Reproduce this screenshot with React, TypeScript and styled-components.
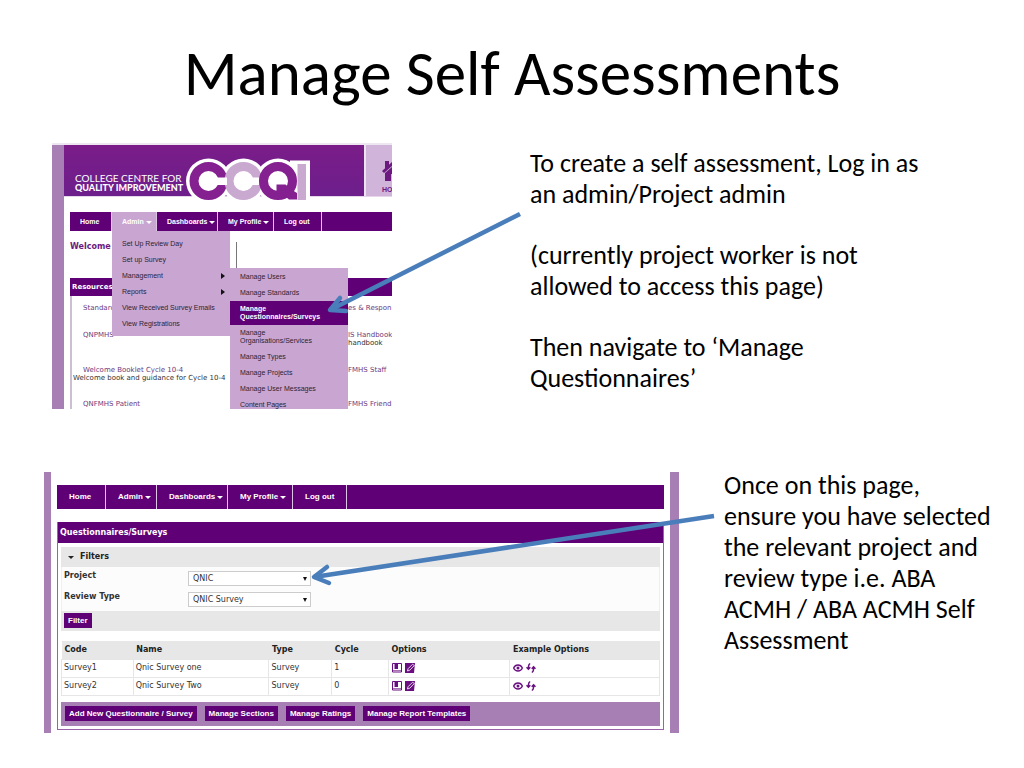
import React from "react";
import styled, { createGlobalStyle } from "styled-components";

const purple = "#5f0076";
const mauve = "#a87fb5";
const lilac = "#c9a6d2";
const arrowBlue = "#4a7ebb";
const arial = `"Liberation Sans", Arial, sans-serif`;
const verdana = `"DejaVu Sans", Verdana, sans-serif`;

const GlobalStyle = createGlobalStyle`
  *, *::before, *::after { box-sizing: border-box; }
  body { margin: 0; background: #fff; color: #000; font-family: Carlito, Calibri, Lato, sans-serif; }
  h1, h2, p, ul { margin: 0; padding: 0; }
  ul { list-style: none; }
  a { color: inherit; text-decoration: none; }
  svg { display: block; }
`;

const Slide = styled.main`
  min-height: 100vh;
  overflow: hidden;
  padding: 36px 0 32px;
`;

const Title = styled.h1`
  height: 107px;
  font-size: 63px;
  line-height: 76px;
  font-weight: 400;
  text-align: center;
`;

const Section = styled.section<{ $cols: string; $left: number; $gap: number }>`
  position: relative;
  display: grid;
  grid-template-columns: ${(p) => p.$cols};
  column-gap: ${(p) => p.$gap}px;
  align-items: start;
  padding-left: ${(p) => p.$left}px;
`;

const FirstSection = styled(Section)`
  margin-bottom: 61px;
`;

const Note = styled.div<{ $top?: number }>`
  padding-top: ${(p) => p.$top ?? 0}px;
  font-size: 26px;
  line-height: 31px;
  white-space: nowrap;
  p + p { margin-top: 30px; }
`;

const ArrowLayer = styled.svg`
  position: absolute;
  top: 0;
  left: 0;
  width: 100%;
  pointer-events: none;
  z-index: 5;
  overflow: visible;
`;

/* ---------- shared navigation bar ---------- */

const NavBar = styled.nav<{ $height: number; $size: number }>`
  display: flex;
  height: ${(p) => p.$height}px;
  background: ${purple};
  color: #fff;
  font: bold ${(p) => p.$size}px/${(p) => p.$height}px ${arial};
  white-space: nowrap;
`;

const NavLink = styled.a<{ $width: number; $pad: number; $active?: boolean }>`
  display: flex;
  align-items: center;
  gap: 2px;
  flex: 0 0 ${(p) => p.$width}px;
  padding-left: ${(p) => p.$pad}px;
  border-right: 1px solid #dcc6e3;
  background: ${(p) => (p.$active ? lilac : "transparent")};
`;

const Down = () => (
  <svg width="6" height="4" viewBox="0 0 6 4" aria-hidden="true">
    <path d="M0 1h6L3 4z" fill="currentColor" />
  </svg>
);

/* ---------- home page with open menus ---------- */

const HomeShot = styled.div`
  position: relative;
  height: 266px;
  overflow: hidden;
  border-top: 2px solid #eee6f0;
  background: #fff;
  display: flex;
`;

const Stripe = styled.div<{ $width: number }>`
  flex: 0 0 ${(p) => p.$width}px;
  background: ${mauve};
`;

const HomeBody = styled.div`
  flex: 1;
  min-width: 0;
`;

const Banner = styled.header`
  position: relative;
  display: flex;
  height: 52px;
  border-bottom: 1px solid #e4d5e9;
  background: linear-gradient(#7a1c88, #6d1f8c);
`;

const BannerText = styled.p`
  flex: 1;
  padding: 28px 0 0 11px;
  color: #fff;
  font: 400 10px/10px Lato, sans-serif;
  white-space: nowrap;
  strong { display: block; font-size: 9px; font-weight: 900; }
`;

const Logo = styled.svg`
  position: absolute;
  left: 120px;
  top: 12px;
`;

const HomeTile = styled.a`
  flex: 0 0 28px;
  overflow: hidden;
  border-left: 2px solid #eee3f1;
  background: #d1b4da;
  color: #6d1a80;
  padding: 16px 0 0 16px;
  font: bold 7px/9px ${arial};
  svg { margin-bottom: 4px; }
`;

const HomeContent = styled.div`
  padding: 15px 0 0 6px;
`;

const WelcomeRow = styled.div`
  display: flex;
  height: 47px;
  padding-top: 11px;
  color: #6b1b80;
  font: bold 8px/9px ${verdana};
`;

const Divider = styled.span`
  width: 1px;
  height: 26px;
  margin-left: 125px;
  background: #777;
`;

const ResourceHead = styled.h2`
  height: 18px;
  padding-left: 2px;
  background: ${purple};
  color: #fff;
  font: bold 7px/18px ${verdana};
`;

const Resources = styled.div`
  display: grid;
  grid-template-columns: 265px 1fr;
  grid-template-rows: 27px 35px 34px 20px;
  padding: 8px 0 0 11px;
  border-left: 2px solid #cdbfd2;
  font: 7px/8px ${verdana};
  white-space: nowrap;
  color: #333;
  a { display: block; color: #6a3b80; }
`;

const Outdented = styled.p`
  margin-left: -10px;
`;

const Menu = styled.ul<{ $left: number; $top: number; $height: number; $pad: number }>`
  position: absolute;
  left: ${(p) => p.$left}px;
  top: ${(p) => p.$top}px;
  width: 118px;
  height: ${(p) => p.$height}px;
  padding-top: ${(p) => p.$pad}px;
  background: ${lilac};
  color: #2c1f33;
  font: 7px/8px ${arial};
  white-space: nowrap;
`;

const MenuItem = styled.li<{ $active?: boolean }>`
  display: flex;
  justify-content: space-between;
  align-items: center;
  padding: 4px 5px 4px 10px;
  background: ${(p) => (p.$active ? purple : "transparent")};
  color: ${(p) => (p.$active ? "#fff" : "inherit")};
  font-weight: ${(p) => (p.$active ? "bold" : "normal")};
`;

/* ---------- questionnaires page ---------- */

const SurveyShot = styled.div`
  display: flex;
  height: 261px;
  margin-top: 2px;
`;

const SurveyBody = styled.div`
  flex: 1;
  min-width: 0;
  padding: 13px 6px 0;
`;

const Panel = styled.div`
  margin-top: 13px;
  border: 1px solid #9a62a8;
  border-top: 0;
  padding-bottom: 3px;
  font: 8px/10px ${verdana};
  color: #333;
`;

const PanelHead = styled.h2`
  margin-bottom: 4px;
  padding-left: 2px;
  background: ${purple};
  color: #fff;
  font: bold 8px/21px ${verdana};
`;

const PanelInner = styled.div`
  margin: 0 3px;
`;

const FilterHead = styled.div`
  display: flex;
  align-items: center;
  gap: 6px;
  height: 20px;
  padding-left: 7px;
  background: #e7e7e7;
  color: #222;
  font-weight: bold;
`;

const FilterBody = styled.div`
  height: 44px;
  padding-top: 4px;
  background: #fcfcfc;
  border: 1px solid #efefef;
  border-width: 0 1px;
`;

const Field = styled.div`
  display: grid;
  grid-template-columns: 124px 123px;
  height: 21px;
  padding-left: 2px;
  label { font-weight: bold; }
`;

const SelectBox = styled.div`
  position: relative;
  height: 15px;
  svg { position: absolute; right: 4px; top: 6px; pointer-events: none; }
`;

const Select = styled.select`
  appearance: none;
  display: block;
  width: 100%;
  height: 15px;
  padding: 0 4px;
  border: 1px solid #ccc;
  border-radius: 0;
  background: #fff;
  color: #333;
  font: 8px/13px ${verdana};
`;

const FilterFoot = styled.div`
  height: 20px;
  margin-bottom: 10px;
  padding: 2px 3px;
  background: #e7e7e7;
`;

const Button = styled.button`
  height: 15px;
  padding: 0 4px;
  border: 0;
  background: ${purple};
  color: #fff;
  font: bold 8px/15px ${arial};
  white-space: nowrap;
`;

const Table = styled.table`
  width: 100%;
  border-collapse: collapse;
  table-layout: fixed;
  th { height: 18px; padding: 0 3px; background: #e7e7e7; color: #222; text-align: left; }
  td { height: 18px; padding: 0 2px; border: 1px solid #e6e6e6; }
`;

const Icons = styled.span`
  display: flex;
  gap: 3px;
  padding-left: 1px;
  color: #6a0f80;
`;

const Footer = styled.div`
  display: flex;
  align-items: center;
  gap: 8px;
  height: 24px;
  margin-top: 6px;
  padding-left: 4px;
  background: ${mauve};
`;

const BookIcon = () => (
  <svg width="10" height="10" viewBox="0 0 10 10" fill="none" stroke="currentColor" aria-hidden="true">
    <path d="M.5.5h9v8.500h-9z" />
    <path d="M2.500 1H6v5H2.500z" fill="currentColor" stroke="none" />
    <path d="M5.500 1v5M1 7.500h8" strokeWidth=".6" />
  </svg>
);
const EditIcon = () => (
  <svg width="10" height="10" viewBox="0 0 10 10" aria-hidden="true">
    <path d="M0 0h10L9 10H0z" fill="currentColor" />
    <path d="M2.500 8 3 5.800 7.600 1.200 9.300 2.500 4.800 7.200z" fill="none" stroke="#fff" strokeWidth=".8" />
  </svg>
);
const EyeIcon = () => (
  <svg width="10" height="10" viewBox="0 0 10 10" fill="none" stroke="currentColor" aria-hidden="true">
    <path d="M.6 5C2.400 1 7.600 1 9.400 5 7.600 9 2.400 9 .6 5z" strokeWidth="1.300" />
    <circle cx="5" cy="5" r="1.500" fill="currentColor" stroke="none" />
  </svg>
);
const SwapIcon = () => (
  <svg width="10" height="10" viewBox="0 0 10 10" fill="none" stroke="currentColor" strokeWidth="1.500" aria-hidden="true">
    <path d="M4.200.8C2.600 1 2.400 2 2.400 5.500M.5 4.200l1.900 2 1.900-2" />
    <path d="M5.800 9.200c1.600-.2 1.800-1.200 1.800-4.700M5.700 5.800l1.900-2 1.900 2" />
  </svg>
);
const Right = () => (
  <svg width="4" height="6" viewBox="0 0 4 6" aria-hidden="true"><path d="M0 0 4 3 0 6z" fill="#111" /></svg>
);

const CcqiLogo = () => (
  <Logo width="128" height="46" viewBox="184 157 128 46" role="img" aria-label="CCQI">
    <g fill="#fff">
      <circle cx="208.500" cy="181" r="22.500" />
      <circle cx="243.500" cy="181" r="22.500" />
      <circle cx="278" cy="181" r="22.500" />
      <rect x="290" y="160.500" width="20" height="42" />
    </g>
    <g fill="none" strokeWidth="9">
      <circle cx="208.500" cy="181" r="14.500" stroke="#84208f" />
      <circle cx="243.500" cy="181" r="14.500" stroke="#c9a9d0" />
      <circle cx="278" cy="181" r="14.500" stroke="#84208f" />
    </g>
    <rect x="215" y="177.500" width="12" height="7.500" fill="#fff" />
    <rect x="250" y="177.500" width="9" height="7.500" fill="#fff" />
    <path d="M276.500 184.500h9l5 4.500 6.500 4v6.500h-8l-6-5h-6.500z" fill="#84208f" />
    <rect x="297.500" y="164" width="8.500" height="36" fill="#c9a9d0" />
  </Logo>
);

const navItems = [
  { label: "Home", menu: false },
  { label: "Admin", menu: true },
  { label: "Dashboards", menu: true },
  { label: "My Profile", menu: true },
  { label: "Log out", menu: false },
];

type SiteNavProps = { height: number; size: number; pad: number; widths: number[]; active?: string };

function SiteNav({ height, size, pad, widths, active }: SiteNavProps) {
  return (
    <NavBar $height={height} $size={size}>
      {navItems.map((item, i) => (
        <NavLink href="#" key={item.label} $width={widths[i]} $pad={pad} $active={item.label === active}>
          {item.label}
          {item.menu && <Down />}
        </NavLink>
      ))}
    </NavBar>
  );
}

const adminMenu = ["Set Up Review Day", "Set up Survey", "Management", "Reports", "View Received Survey Emails", "View Registrations"];
const manageMenu = [
  ["Manage Users"],
  ["Manage Standards"],
  ["Manage", "Questionnaires/Surveys"],
  ["Manage", "Organisations/Services"],
  ["Manage Types"],
  ["Manage Projects"],
  ["Manage User Messages"],
  ["Content Pages"],
];

const surveys = [
  { code: "Survey1", name: "Qnic Survey one", type: "Survey", cycle: 1 },
  { code: "Survey2", name: "Qnic Survey Two", type: "Survey", cycle: 0 },
];

function Lines({ text }: { text: string[] }) {
  return (
    <>
      {text.map((line, i) => (
        <React.Fragment key={line}>
          {i > 0 && <br />}
          {line}
        </React.Fragment>
      ))}
    </>
  );
}

function Dropdown({ id, label, value }: { id: string; label: string; value: string }) {
  return (
    <Field>
      <label htmlFor={id}>{label}</label>
      <SelectBox>
        <Select id={id} defaultValue={value}>
          <option>{value}</option>
        </Select>
        <svg width="4" height="4" viewBox="0 0 4 4" aria-hidden="true"><path d="M0 0h4L2 4z" fill="#111" /></svg>
      </SelectBox>
    </Field>
  );
}

function Arrow({ shaft, head }: { shaft: string; head: string }) {
  return (
    <g fill="none" stroke={arrowBlue} strokeWidth="4.500" strokeLinejoin="round">
      <path d={shaft} />
      <path d={head} strokeLinecap="round" />
    </g>
  );
}

export default function App() {
  return (
    <Slide>
      <GlobalStyle />
      <Title>Manage Self Assessments</Title>

      <FirstSection $cols="340fr 494fr" $left={52} $gap={138}>
        <HomeShot>
          <Stripe $width={12} />
          <HomeBody>
            <Banner>
              <BannerText>
                COLLEGE CENTRE FOR
                <strong>QUALITY IMPROVEMENT</strong>
              </BannerText>
              <CcqiLogo />
              <HomeTile href="#">
                <svg width="22" height="20" viewBox="0 0 22 20" aria-hidden="true">
                  <path d="M0 10 11 0l11 10-2 2-9-8-9 8zM3 0h4v4L3 8zM3 12l8-7 8 7v8h-6v-7H9v7H3z" fill="currentColor" />
                </svg>
                HOME
              </HomeTile>
            </Banner>
            <HomeContent>
              <SiteNav height={19} size={7} pad={10} widths={[42, 45, 61, 56, 48]} active="Admin" />
              <WelcomeRow>
                Welcome
                <Divider />
              </WelcomeRow>
              <ResourceHead>Resources</ResourceHead>
              <Resources>
                <a href="#">Standards</a>
                <a href="#">es &amp; Respon</a>
                <a href="#">QNPMHS</a>
                <div>
                  <a href="#">IS Handbook</a>
                  handbook
                </div>
                <div>
                  <a href="#">Welcome Booklet Cycle 10-4</a>
                  <Outdented>Welcome book and guidance for Cycle 10-4</Outdented>
                </div>
                <a href="#">FMHS Staff</a>
                <a href="#">QNFMHS Patient</a>
                <a href="#">FMHS Friend</a>
              </Resources>
            </HomeContent>
          </HomeBody>
          <Menu $left={60} $top={86} $height={105} $pad={5}>
            {adminMenu.map((item) => (
              <MenuItem key={item}>
                <a href="#">{item}</a>
                {(item === "Management" || item === "Reports") && <Right />}
              </MenuItem>
            ))}
          </Menu>
          <Menu $left={178} $top={123} $height={143} $pad={1}>
            {manageMenu.map((item, i) => (
              <MenuItem key={i} $active={i === 2}>
                <a href="#"><Lines text={item} /></a>
              </MenuItem>
            ))}
          </Menu>
        </HomeShot>
        <Note $top={5}>
          <p><Lines text={["To create a self assessment, Log in as", "an admin/Project admin"]} /></p>
          <p><Lines text={["(currently project worker is not", "allowed to access this page)"]} /></p>
          <p><Lines text={["Then navigate to ‘Manage", "Questionnaires’"]} /></p>
        </Note>
        <ArrowLayer height="266" viewBox="0 143 1024 266" preserveAspectRatio="none" aria-hidden="true">
          <Arrow shaft="M520 214 330 310" head="M340 298 330 310 346 311" />
        </ArrowLayer>
      </FirstSection>

      <Section $cols="635fr 300fr" $left={44} $gap={45}>
        <SurveyShot>
          <Stripe $width={7} />
          <SurveyBody>
            <SiteNav height={24} size={8} pad={12} widths={[49, 51, 71, 65, 54]} />
            <Panel>
              <PanelHead>Questionnaires/Surveys</PanelHead>
              <PanelInner>
                <FilterHead>
                  <Down />
                  Filters
                </FilterHead>
                <FilterBody>
                  <Dropdown id="project" label="Project" value="QNIC" />
                  <Dropdown id="review-type" label="Review Type" value="QNIC Survey" />
                </FilterBody>
                <FilterFoot>
                  <Button type="button">Filter</Button>
                </FilterFoot>
                <Table>
                  <colgroup>
                    <col width="12%" />
                    <col width="22.700%" />
                    <col width="10.500%" />
                    <col width="9.500%" />
                    <col width="20.300%" />
                    <col />
                  </colgroup>
                  <thead>
                    <tr>
                      <th>Code</th><th>Name</th><th>Type</th><th>Cycle</th><th>Options</th><th>Example Options</th>
                    </tr>
                  </thead>
                  <tbody>
                    {surveys.map((s) => (
                      <tr key={s.code}>
                        <td>{s.code}</td><td>{s.name}</td><td>{s.type}</td><td>{s.cycle}</td>
                        <td><Icons><BookIcon /><EditIcon /></Icons></td>
                        <td><Icons><EyeIcon /><SwapIcon /></Icons></td>
                      </tr>
                    ))}
                  </tbody>
                </Table>
                <Footer>
                  <Button type="button">Add New Questionnaire / Survey</Button>
                  <Button type="button">Manage Sections</Button>
                  <Button type="button">Manage Ratings</Button>
                  <Button type="button">Manage Report Templates</Button>
                </Footer>
              </PanelInner>
            </Panel>
          </SurveyBody>
          <Stripe $width={9} />
        </SurveyShot>
        <Note>
          <p>
            <Lines text={["Once on this page,", "ensure you have selected", "the relevant project and", "review type i.e. ABA", "ACMH / ABA ACMH Self", "Assessment"]} />
          </p>
        </Note>
        <ArrowLayer height="263" viewBox="0 470 1024 263" preserveAspectRatio="none" aria-hidden="true">
          <Arrow shaft="M714 516 314 577" head="M327 567 314 577 329 583" />
        </ArrowLayer>
      </Section>
    </Slide>
  );
}
